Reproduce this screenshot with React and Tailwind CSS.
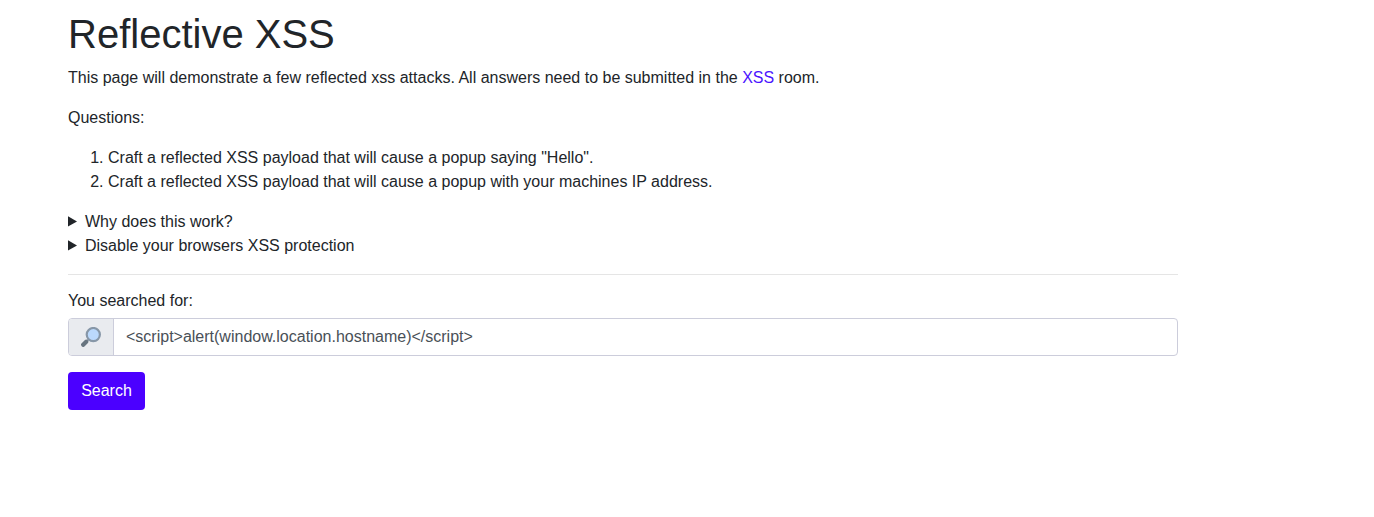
function SearchIcon() {
  return (
    <svg width="20" height="20" viewBox="0 0 20 20" fill="none" aria-hidden="true">
      <path d="M6.4 13.6 L8.4 11.6" stroke="#8797a5" strokeWidth="2" />
      <path d="M2.2 17.8 L5.2 14.8" stroke="#67747f" strokeWidth="4.2" strokeLinecap="round" />
      <circle cx="12.3" cy="7.6" r="6.6" fill="#bbd9fd" stroke="#8797a8" strokeWidth="2.2" />
    </svg>
  );
}

function Disclosure({ title }) {
  return (
    <button type="button" className="flex h-6 items-center text-left">
      <svg className="mr-2 mb-px block" width="9" height="11" viewBox="0 0 9 11" aria-hidden="true">
        <path d="M0 0.2 L9 5.4 L0 10.6 Z" fill="#212529" />
      </svg>
      {title}
    </button>
  );
}

export default function App() {
  return (
    <main className="min-h-screen bg-white pt-2.5 pl-[68px] font-['Liberation_Sans',Arial,sans-serif] text-base leading-6 text-[#212529]">
      <div className="w-[1110px]">
        <h1 className="mb-2 text-[40px] leading-[48px] font-normal">Reflective XSS</h1>
        <p className="mb-4">
          This page will demonstrate a few reflected xss attacks. All answers need to be submitted in the{' '}
          <a href="#xss" className="text-[#4b14ff]">XSS</a> room.
        </p>
        <p className="mb-4">Questions:</p>
        <ol className="mb-4 list-decimal pl-10">
          <li>Craft a reflected XSS payload that will cause a popup saying "Hello".</li>
          <li>Craft a reflected XSS payload that will cause a popup with your machines IP address.</li>
        </ol>
        <Disclosure title="Why does this work?" />
        <Disclosure title="Disable your browsers XSS protection" />
        <hr className="mt-4 mb-3.5 border-t border-black/10" />
        <form onSubmit={(e) => e.preventDefault()}>
          <label htmlFor="query" className="mb-[5px] block">You searched for:</label>
          <div className="mb-4 flex h-[38px] overflow-hidden rounded border border-[#cccddb]">
            <span className="flex w-[45px] items-center justify-center border-r border-[#cccddb] bg-[#e9ebef]">
              <SearchIcon />
            </span>
            <input
              id="query"
              className="min-w-0 flex-1 px-3 text-[#495057] outline-none"
              defaultValue="<script>alert(window.location.hostname)</script>"
            />
          </div>
          <button type="submit" className="h-[38px] w-[77px] rounded bg-[#4b00ff] text-white">Search</button>
        </form>
      </div>
    </main>
  );
}
